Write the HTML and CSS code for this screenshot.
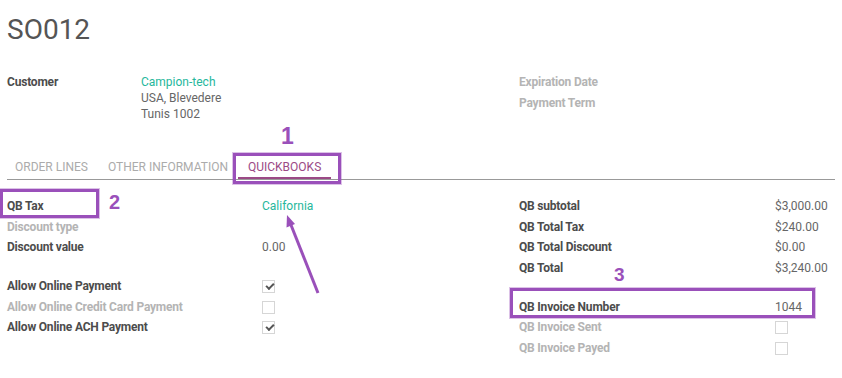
FILE: index.html
```html
<!DOCTYPE html>
<html lang="en">
<head>
    <meta charset="UTF-8">
    <title>SO012</title>
    <link rel="stylesheet" href="styles.css">
</head>
<body>
    <div class="sheet">
        <h1 class="title">SO012</h1>

        <div class="group-row header">
            <div class="header-left">
                <div class="label">Customer</div>
                <div class="address">
                    <div class="link">Campion-tech</div>
                    <div>USA, Blevedere</div>
                    <div>Tunis 1002</div>
                </div>
            </div>
            <div class="header-right">
                <div class="label muted">Expiration Date</div>
                <div class="label muted">Payment Term</div>
            </div>
        </div>

        <div class="tabs">
            <div class="tab first">ORDER LINES</div>
            <div class="tab">OTHER INFORMATION</div>
            <div class="tab active">QUICKBOOKS</div>
        </div>

        <div class="group-row fields">
            <div class="field-table left">
                <div class="label">QB Tax</div><div class="value link">California</div>
                <div class="label muted">Discount type</div><div class="value"></div>
                <div class="label">Discount value</div><div class="value">0.00</div>
                <div class="spacer"></div>
                <div class="label">Allow Online Payment</div><div class="value"><span class="check on"></span></div>
                <div class="label muted">Allow Online Credit Card Payment</div><div class="value"><span class="check"></span></div>
                <div class="label">Allow Online ACH Payment</div><div class="value"><span class="check on"></span></div>
            </div>
            <div class="field-table right">
                <div class="label">QB subtotal</div><div class="value">$3,000.00</div>
                <div class="label">QB Total Tax</div><div class="value">$240.00</div>
                <div class="label">QB Total Discount</div><div class="value">$0.00</div>
                <div class="label">QB Total</div><div class="value">$3,240.00</div>
                <div class="spacer"></div>
                <div class="label">QB Invoice Number</div><div class="value">1044</div>
                <div class="label muted">QB Invoice Sent</div><div class="value"><span class="check"></span></div>
                <div class="label muted">QB Invoice Payed</div><div class="value"><span class="check"></span></div>
            </div>
        </div>

        <!-- annotations drawn over the screenshot -->
        <div class="mark box-1"></div>
        <div class="mark box-2"></div>
        <div class="mark box-3"></div>
        <div class="num num-1">1</div>
        <div class="num num-2">2</div>
        <div class="num num-3">3</div>
        <svg class="arrow" width="842" height="378" viewBox="0 0 842 378">
            <line x1="318" y1="293" x2="291" y2="225" stroke="#9a50ba" stroke-width="3"/>
            <polygon points="287,215 295,224 286.5,227.5" fill="#9a50ba"/>
        </svg>
    </div>
</body>
</html>
```

FILE: styles.css
```css
body {
    margin: 0;
    background: #fff;
    font-family: Roboto, "Noto Sans", sans-serif;
    font-size: 12px;
    color: #666;
}

.sheet {
    position: relative;
    width: 842px;
    height: 378px;
    overflow: hidden;
    padding: 0 7px;
    box-sizing: border-box;
}

.title {
    margin: 14px 0 0;
    font-size: 28px;
    line-height: 32px;
    font-weight: 400;
    color: #555;
}

.group-row {
    display: grid;
    grid-template-columns: 512px 1fr;
    align-items: start;
}

.header {
    margin-top: 26px;
}

.header-left {
    display: grid;
    grid-template-columns: 134px 1fr;
    padding-top: 2px;
    line-height: 16px;
}

.header-right .label {
    line-height: 21px;
}

.label {
    font-weight: 700;
    color: #4c4c4c;
    letter-spacing: -0.2px;
}

.label.muted {
    color: #b4b4b4;
}

.link {
    color: #26b79c;
}

/* tabs */
.tabs {
    display: flex;
    margin-top: 29px;
    border-bottom: 1px solid #999;
}

.tab {
    padding: 8px 10px 2px;
    line-height: 16px;
    color: #ababab;
    border-bottom: 2px solid transparent;
}

.tab.first {
    padding-left: 8px;
}

.tab.active {
    color: #9b4a86;
    border-bottom-color: #9b4a86;
}

/* form fields */
.fields {
    margin-top: 16px;
}

.field-table {
    display: grid;
    grid-template-columns: 255px 1fr;
    align-content: start;
    line-height: 20.67px;
}

.field-table.right {
    grid-template-columns: 256px 1fr;
}

.field-table .spacer {
    grid-column: 1 / 3;
    height: 18px;
}

.value {
    display: flex;
    align-items: center;
    height: 20.67px;
}

.check {
    position: relative;
    width: 11px;
    height: 11px;
    border: 1px solid #d6d6d6;
    background: #fff;
}

.check.on::after {
    content: "";
    position: absolute;
    left: 3px;
    top: 2px;
    width: 6px;
    height: 3px;
    border-left: 2px solid #555;
    border-bottom: 2px solid #555;
    transform: rotate(-45deg);
}

/* annotations */
.mark {
    position: absolute;
    border: 3px solid #9a50ba;
    box-shadow: 0 0 0 1px rgba(154, 80, 186, 0.35);
}

.box-1 {
    left: 233px;
    top: 153px;
    width: 102px;
    height: 25px;
}

.box-2 {
    left: 0;
    top: 189px;
    width: 93px;
    height: 23px;
}

.box-3 {
    left: 510px;
    top: 288px;
    width: 299px;
    height: 24px;
}

.num {
    position: absolute;
    font-family: "Liberation Sans", Arial, sans-serif;
    font-weight: 700;
    color: #9a50ba;
    line-height: 1;
}

.num-1 {
    left: 281px;
    top: 125px;
    font-size: 23px;
}

.num-2 {
    left: 109px;
    top: 192px;
    font-size: 20px;
}

.num-3 {
    left: 614px;
    top: 265px;
    font-size: 19px;
}

.arrow {
    position: absolute;
    left: 0;
    top: 0;
    pointer-events: none;
}
```
